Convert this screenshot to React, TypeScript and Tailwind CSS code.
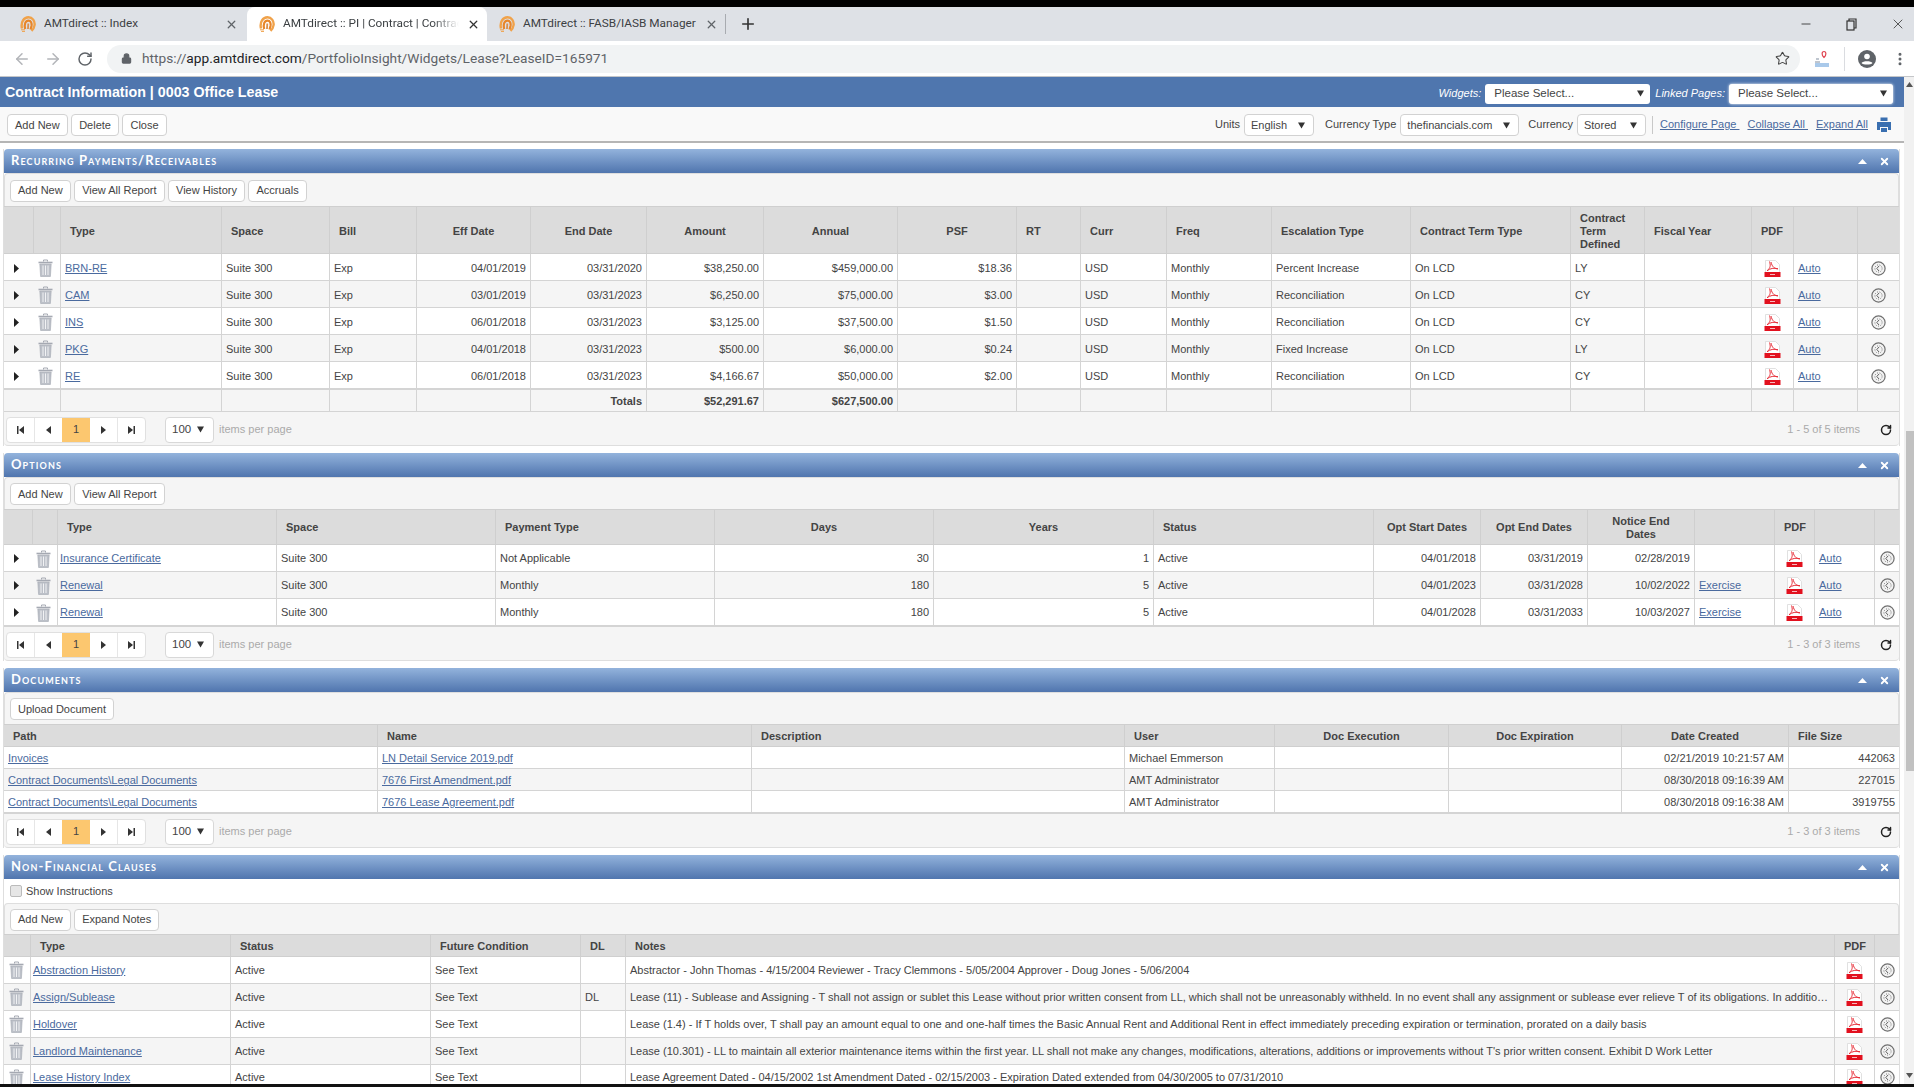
import React from "react";
import { ArrowLeft, ArrowRight, RotateCw, Star, Lock, Plus, X, Minus, EllipsisVertical } from "lucide-react";

type Col = { w: string; t?: React.ReactNode; ha?: "l" | "c"; ca?: "l" | "r" | "c"; noLine?: boolean };

const Favicon = () => (
  <svg width="16" height="16" viewBox="0 0 16 16" fill="none" className="shrink-0">
    <path d="M2 12.5 C0.5 6 4 1.2 8.5 1.2 C12.5 1.2 15 5 14.6 9 C14.3 11.5 13 13.5 11.5 14.8" stroke="#f0a24a" strokeWidth="2.4" />
    <path d="M5.2 13 C4 8 5.5 4.6 8.5 4.6 C11 4.6 12 7 11.5 10 L10.5 13.5" stroke="#e8862a" strokeWidth="2.2" />
    <path d="M8 13 L8.3 7.5" stroke="#d98f4e" strokeWidth="1.8" />
    <path d="M1 13.8 H5 M2 15.4 H5" stroke="#f0a24a" strokeWidth="1" />
  </svg>
);

const Trash = () => (
  <svg width="15" height="18" viewBox="0 0 15 18" className="block mx-auto -translate-x-[1px]" fill="none">
    <path d="M5.5 2.5 V1 H9.5 V2.5" stroke="#a5a9b2" strokeWidth="1" />
    <path d="M0.5 3.5 H14.5" stroke="#a5a9b2" strokeWidth="1.6" />
    <path d="M1.8 5 H13.2 L12.4 17.5 H2.6 Z" fill="#bcc0c8" stroke="#a5a9b2" strokeWidth="0.6" />
    <path d="M5 6.5 V16 M7.5 6.5 V16 M10 6.5 V16" stroke="#f1f2f4" strokeWidth="1" />
  </svg>
);

const Pdf = () => (
  <svg width="17" height="17" viewBox="0 0 17 17" className="block mx-auto" fill="none">
    <path d="M1.5 12 V0.5 H11.5 L15.5 4.5 V12" fill="#fff" stroke="#d9d9d9" strokeWidth="0.8" />
    <path d="M5.5 1.5 C6.5 5 7 7.5 3 10.8 C6 8.5 10 7.5 14 8.8 C11 9 8 7 7 2" stroke="#e8303a" strokeWidth="1" fill="none" />
    <rect x="0.5" y="12" width="16" height="5" fill="#e2101e" />
    <rect x="6" y="14" width="5" height="1" fill="#f6b8bc" />
  </svg>
);

const Hist = () => (
  <svg width="15" height="15" viewBox="0 0 15 15" className="block mx-auto" fill="none">
    <circle cx="7.5" cy="7.5" r="6.6" fill="#f2f2f2" stroke="#6f6f6f" strokeWidth="1.2" />
    <circle cx="7.5" cy="7.5" r="3.6" stroke="#666" strokeWidth="0.9" strokeDasharray="1 1.5" />
    <path d="M8 5 L5.8 7.5 L8 10" stroke="#555" strokeWidth="0.9" />
  </svg>
);

const Expand = () => (
  <svg width="5" height="9" viewBox="0 0 5 9" className="block mx-auto -translate-x-[2px]">
    <path d="M0 0 L5 4.5 L0 9 Z" fill="#222" />
  </svg>
);

const Down = () => (
  <svg width="7" height="7" viewBox="0 0 7 7" className="shrink-0">
    <path d="M0 0.5 H7 L3.5 6.5 Z" fill="#333" />
  </svg>
);

const Lnk = ({ children, cls = "" }: { children: React.ReactNode; cls?: string }) => <a className={`text-[#4a6a9e] underline ${cls}`}>{children}</a>;

const Btn = ({ children }: { children: React.ReactNode }) => (
  <div className="h-[22px] px-[7px] flex items-center bg-white border border-[#d2d2d2] rounded-[4px] text-[#444] whitespace-nowrap">{children}</div>
);

const Sel = ({ children, w }: { children: React.ReactNode; w: string }) => (
  <div className={`${w} pl-[6px] h-[22px] pr-[8px] flex items-center justify-between bg-white border border-[#d2d2d2] rounded-[4px] text-[#444] whitespace-nowrap`}>
    <span>{children}</span>
    <Down />
  </div>
);

const Title = ({ children }: { children: React.ReactNode }) => (
  <div className="h-[24px] shrink-0 rounded-t-[4px] bg-gradient-to-b from-[#93b3dc] to-[#5075ae] flex items-center justify-between pl-[7px] pr-[9px]">
    <span className="font-['Lato',sans-serif] font-bold text-[13px] tracking-[1.1px] text-white [font-variant-caps:small-caps] whitespace-nowrap">{children}</span>
    <span className="flex items-center gap-[12px]">
      <svg width="9" height="5" viewBox="0 0 9 5"><path d="M0 5 L4.5 0 L9 5 Z" fill="#fff" /></svg>
      <X size={11} strokeWidth={4} className="text-white" />
    </span>
  </div>
);

const Bar = ({ items, h }: { items: string[]; h: string }) => (
  <div className={`${h} shrink-0 bg-[#f5f5f5] flex items-center gap-[3.5px] pl-[5px] pt-[1px] border-t border-x border-[#dedede] rounded-t-[4px]`}>
    {items.map((i) => (
      <Btn key={i}>{i}</Btn>
    ))}
  </div>
);

const Pager = ({ label, h }: { label: string; h: string }) => (
  <div className={`${h} shrink-0 bg-[#f5f5f5] flex items-center pl-[2px] pr-[7px] pt-[2px] border-b border-[#dedede] rounded-b-[4px]`}>
    <div className="flex h-[26px] w-[140px] bg-white border border-[#e0e0e0] rounded-[4px] overflow-hidden">
      <div className="flex-1 flex items-center justify-center border-r border-[#e6e6e6]">
        <svg width="7" height="8" viewBox="0 0 7 8"><path d="M0 0 H1.5 V8 H0 Z M7 0 V8 L2 4 Z" fill="#333" /></svg>
      </div>
      <div className="flex-1 flex items-center justify-center">
        <svg width="5" height="8" viewBox="0 0 5 8"><path d="M5 0 V8 L0 4 Z" fill="#333" /></svg>
      </div>
      <div className="w-[28px] flex items-center justify-center bg-[#fcc76f] text-[#444]">1</div>
      <div className="flex-1 flex items-center justify-center border-r border-[#e6e6e6]">
        <svg width="5" height="8" viewBox="0 0 5 8"><path d="M0 0 V8 L5 4 Z" fill="#333" /></svg>
      </div>
      <div className="flex-1 flex items-center justify-center">
        <svg width="7" height="8" viewBox="0 0 7 8"><path d="M0 0 V8 L5 4 Z M5.5 0 H7 V8 H5.5 Z" fill="#333" /></svg>
      </div>
    </div>
    <div className="ml-[19px] mr-[5px]">
      <div className="w-[49px] h-[26px] pl-[6px] pr-[9px] flex items-center justify-between bg-white border border-[#d8d8d8] rounded-[4px] text-[#444] text-[11.5px]">
        <span>100</span>
        <Down />
      </div>
    </div>
    <span className="text-[#aaa]">items per page</span>
    <span className="ml-auto text-[#aaa] mr-[20px]">{label}</span>
    <RotateCw size={12} strokeWidth={3} className="text-[#222]" />
  </div>
);

const Grid = ({
  cols,
  rows,
  headH,
  rowH,
  lastRow,
  totals,
  nudge = "",
  headNudge = "",
}: {
  cols: Col[];
  rows: React.ReactNode[][];
  headH: string;
  rowH: string;
  lastRow: string;
  totals?: React.ReactNode;
  nudge?: string;
  headNudge?: string;
}) => (
  <table className="table-fixed w-full border-separate border-spacing-0 shrink-0">
    <colgroup>
      {cols.map((c, i) => (
        <col key={i} className={c.w} />
      ))}
    </colgroup>
    <thead>
      <tr className={headH}>
        {cols.map((c, i) => (
          <th
            key={i}
            className={`bg-[#dcdcdc] border-t border-b border-[#cfcfcf] font-bold text-[#444] leading-[13px] ${headNudge} ${i > 0 ? "border-l" : ""} ${
              c.ha === "c" ? "text-center px-[4px]" : "text-left pl-[9px] pr-[2px]"
            }`}
          >
            {c.t}
          </th>
        ))}
      </tr>
    </thead>
    <tbody>
      {rows.map((r, ri) => (
        <tr key={ri} className={`${ri === rows.length - 1 ? lastRow : rowH} ${ri % 2 ? "bg-[#f5f5f5]" : "bg-white"}`}>
          {r.map((cell, i) => {
            const c = cols[i];
            return (
              <td
                key={i}
                className={`${ri === rows.length - 1 ? "border-b-2" : "border-b"} border-[#d4d4d4] px-[4px] truncate text-[#444] ${nudge} ${
                  i > 0 && !c.noLine ? "border-l" : ""
                } ${c.ca === "r" ? "text-right" : c.ca === "c" ? "text-center" : "text-left"}`}
              >
                {cell}
              </td>
            );
          })}
        </tr>
      ))}
    </tbody>
    {totals}
  </table>
);

const recCols: Col[] = [
  { w: "w-[29px]" },
  { w: "w-[27px]", noLine: true },
  { w: "w-[161px]", t: "Type" },
  { w: "w-[108px]", t: "Space" },
  { w: "w-[87px]", t: "Bill" },
  { w: "w-[114px]", t: "Eff Date", ha: "c", ca: "r" },
  { w: "w-[116px]", t: "End Date", ha: "c", ca: "r" },
  { w: "w-[117px]", t: "Amount", ha: "c", ca: "r" },
  { w: "w-[134px]", t: "Annual", ha: "c", ca: "r" },
  { w: "w-[119px]", t: "PSF", ha: "c", ca: "r" },
  { w: "w-[64px]", t: "RT" },
  { w: "w-[86px]", t: "Curr" },
  { w: "w-[105px]", t: "Freq" },
  { w: "w-[139px]", t: "Escalation Type" },
  { w: "w-[160px]", t: "Contract Term Type" },
  { w: "w-[74px]", t: <>Contract<br />Term<br />Defined</> },
  { w: "w-[107px]", t: "Fiscal Year" },
  { w: "w-[42px]", t: "PDF" },
  { w: "w-[64px]" },
  { w: "w-[42px]" },
];

const recData = [
  ["BRN-RE", "04/01/2019", "03/31/2020", "$38,250.00", "$459,000.00", "$18.36", "Percent Increase", "LY"],
  ["CAM", "03/01/2019", "03/31/2023", "$6,250.00", "$75,000.00", "$3.00", "Reconciliation", "CY"],
  ["INS", "06/01/2018", "03/31/2023", "$3,125.00", "$37,500.00", "$1.50", "Reconciliation", "CY"],
  ["PKG", "04/01/2018", "03/31/2023", "$500.00", "$6,000.00", "$0.24", "Fixed Increase", "LY"],
  ["RE", "06/01/2018", "03/31/2023", "$4,166.67", "$50,000.00", "$2.00", "Reconciliation", "CY"],
];
const recRows = recData.map((d) => [
  <Expand />, <Trash />, <Lnk>{d[0]}</Lnk>, "Suite 300", "Exp", d[1], d[2], d[3], d[4], d[5], "", "USD", "Monthly", d[6], "On LCD", d[7], "",
  <Pdf />, <Lnk>Auto</Lnk>, <Hist />,
]);

const optCols: Col[] = [
  { w: "w-[28px]" },
  { w: "w-[25px]", noLine: true },
  { w: "w-[219px]", t: "Type" },
  { w: "w-[219px]", t: "Space" },
  { w: "w-[219px]", t: "Payment Type" },
  { w: "w-[219px]", t: "Days", ha: "c", ca: "r" },
  { w: "w-[220px]", t: "Years", ha: "c", ca: "r" },
  { w: "w-[220px]", t: "Status" },
  { w: "w-[107px]", t: "Opt Start Dates", ha: "c", ca: "r" },
  { w: "w-[107px]", t: "Opt End Dates", ha: "c", ca: "r" },
  { w: "w-[107px]", t: <>Notice End<br />Dates</>, ha: "c", ca: "r" },
  { w: "w-[80px]" },
  { w: "w-[40px]", t: "PDF" },
  { w: "w-[60px]" },
  { w: "w-[25px]" },
];

const optData = [
  ["Insurance Certificate", "Not Applicable", "30", "1", "04/01/2018", "03/31/2019", "02/28/2019", false],
  ["Renewal", "Monthly", "180", "5", "04/01/2023", "03/31/2028", "10/02/2022", true],
  ["Renewal", "Monthly", "180", "5", "04/01/2028", "03/31/2033", "10/03/2027", true],
] as const;
const optRows = optData.map((d) => [
  <Expand />, <Trash />, <Lnk cls="-ml-[2px]">{d[0]}</Lnk>, "Suite 300", d[1], d[2], d[3], "Active", d[4], d[5], d[6],
  d[7] ? <Lnk>Exercise</Lnk> : "", <Pdf />, <Lnk>Auto</Lnk>, <Hist />,
]);

const docCols: Col[] = [
  { w: "w-[373px]", t: "Path" },
  { w: "w-[374px]", t: "Name" },
  { w: "w-[373px]", t: "Description" },
  { w: "w-[150px]", t: "User" },
  { w: "w-[174px]", t: "Doc Execution", ha: "c" },
  { w: "w-[173px]", t: "Doc Expiration", ha: "c" },
  { w: "w-[167px]", t: "Date Created", ha: "c", ca: "r" },
  { w: "w-[111px]", t: "File Size", ca: "r" },
];
const docRows: React.ReactNode[][] = [
  [<Lnk>Invoices</Lnk>, <Lnk>LN Detail Service 2019.pdf</Lnk>, "", "Michael Emmerson", "", "", "02/21/2019 10:21:57 AM", "442063"],
  [<Lnk>Contract Documents\Legal Documents</Lnk>, <Lnk>7676 First Amendment.pdf</Lnk>, "", "AMT Administrator", "", "", "08/30/2018 09:16:39 AM", "227015"],
  [<Lnk>Contract Documents\Legal Documents</Lnk>, <Lnk>7676 Lease Agreement.pdf</Lnk>, "", "AMT Administrator", "", "", "08/30/2018 09:16:38 AM", "3919755"],
];

const nfCols: Col[] = [
  { w: "w-[26px]" },
  { w: "w-[200px]", t: "Type" },
  { w: "w-[200px]", t: "Status" },
  { w: "w-[150px]", t: "Future Condition" },
  { w: "w-[45px]", t: "DL" },
  { w: "w-[1209px]", t: "Notes" },
  { w: "w-[40px]", t: "PDF" },
  { w: "w-[25px]" },
];
const nfData = [
  ["Abstraction History", "", "Abstractor - John Thomas - 4/15/2004 Reviewer - Tracy Clemmons - 5/05/2004 Approver - Doug Jones - 5/06/2004"],
  ["Assign/Sublease", "DL", "Lease (11) - Sublease and Assigning - T shall not assign or sublet this Lease without prior written consent from LL, which shall not be unreasonably withheld. In no event shall any assignment or sublease ever relieve T of its obligations. In addition, T shall remain liable"],
  ["Holdover", "", "Lease (1.4) - If T holds over, T shall pay an amount equal to one and one-half times the Basic Annual Rent and Additional Rent in effect immediately preceding expiration or termination, prorated on a daily basis"],
  ["Landlord Maintenance", "", "Lease (10.301) - LL to maintain all exterior maintenance items within the first year. LL shall not make any changes, modifications, alterations, additions or improvements without T's prior written consent. Exhibit D Work Letter"],
  ["Lease History Index", "", "Lease Agreement Dated - 04/15/2002 1st Amendment Dated - 02/15/2003 - Expiration Dated extended from 04/30/2005 to 07/31/2010"],
];
const nfRows = nfData.map((d) => [<Trash />, <Lnk cls="-ml-[2px]">{d[0]}</Lnk>, "Active", "See Text", d[1], d[2], <Pdf />, <Hist />]);

const Tab = ({ w, title, active, textW }: { w: string; title: string; active?: boolean; textW: string }) => (
  <div className={`${w} h-full flex items-center pl-[12px] pr-[9px] gap-[8px] ${active ? "bg-white rounded-t-[8px]" : ""}`}>
    <Favicon />
    <span className={`${textW} shrink-0 overflow-hidden whitespace-nowrap text-[11.8px] text-[#3c4043] ${active ? "[mask-image:linear-gradient(to_right,black_85%,transparent)]" : ""}`}>{title}</span>
    <X size={13} strokeWidth={2.4} className={`ml-auto shrink-0 ${active ? "text-[#333]" : "text-[#5f6368]"}`} />
  </div>
);

export default function App() {
  return (
    <div className="w-[1914px] h-[1087px] overflow-hidden flex flex-col bg-white font-['Liberation_Sans',Arial,sans-serif] text-[11px] text-[#444]">
      <div className="h-[7px] shrink-0 bg-black" />
      {/* tabs */}
      <div className="h-[34px] shrink-0 bg-[#dee1e6] flex items-center font-['Roboto',sans-serif]">
        <div className="w-[8px]" />
        <Tab w="w-[239px]" title="AMTdirect :: Index" textW="w-[170px]" />
        <Tab w="w-[240px]" title="AMTdirect :: PI | Contract | Contract Information" textW="w-[176px]" active />
        <Tab w="w-[238px]" title="AMTdirect :: FASB/IASB Manager" textW="w-[174px]" />
        <div className="w-px h-[20px] bg-[#a8abb0]" />
        <Plus size={18} strokeWidth={2.2} className="ml-[13px] text-[#333]" />
        <div className="ml-auto flex items-center gap-[33px] pr-[8px] text-[#333]">
          <Minus size={14} strokeWidth={1.5} />
          <svg width="11" height="13" viewBox="0 0 11 13" fill="none" stroke="#333" strokeWidth="1.2"><rect x="1" y="3" width="7" height="9" /><path d="M3 3 V1 H10 V10 H8" /></svg>
          <X size={16} strokeWidth={1.2} />
        </div>
      </div>
      {/* address bar */}
      <div className="h-[36px] shrink-0 bg-white border-b border-[#c4c6c9] flex items-center pl-[13px] font-['Roboto',sans-serif]">
        <ArrowLeft size={18} strokeWidth={2} className="text-[#b3b5b9]" />
        <ArrowRight size={18} strokeWidth={2} className="ml-[13px] text-[#b3b5b9]" />
        <RotateCw size={16} strokeWidth={2.2} className="ml-[15px] text-[#5f6368]" />
        <div className="ml-[14px] w-[1693px] h-[28px] rounded-full bg-[#f1f3f4] flex items-center pl-[14px] pr-[10px]">
          <Lock size={11} strokeWidth={2.5} className="text-[#5f6368] fill-[#5f6368]" />
          <span className="ml-[10px] text-[13.7px] text-[#5f6368] whitespace-nowrap">
            https://<span className="text-[#202124]">app.amtdirect.com</span>/PortfolioInsight/Widgets/Lease?LeaseID=165971
          </span>
          <Star size={15} strokeWidth={1.7} className="ml-auto text-[#444]" />
        </div>
        <svg width="18" height="18" viewBox="0 0 18 18" className="ml-[13px]" fill="none">
          <path d="M11 1.5 C8.5 1.5 8.5 5.5 11 7.5 C13.5 5.5 13.5 1.5 11 1.5 Z" stroke="#e04652" strokeWidth="1.2" />
          <path d="M2 12 H7 M3 9 H6" stroke="#aab4c0" strokeWidth="1.4" />
          <rect x="2" y="13" width="14" height="4" fill="#a9c9ea" />
        </svg>
        <div className="ml-[13px] w-px h-[24px] bg-[#dadce0]" />
        <svg width="20" height="20" viewBox="0 0 20 20" className="ml-[12px]">
          <circle cx="10" cy="10" r="9" fill="#5f6368" />
          <circle cx="10" cy="7.5" r="2.8" fill="#fff" />
          <path d="M4.5 14 C6 11.5 14 11.5 15.5 14 C14 16 6 16 4.5 14 Z" fill="#fff" />
        </svg>
        <EllipsisVertical size={16} strokeWidth={2.5} className="ml-[15px] text-[#5f6368]" />
      </div>
      {/* page */}
      <div className="flex-1 min-h-0 flex">
        <div className="w-[1904px] h-full overflow-hidden flex flex-col">
          <div className="h-[30px] shrink-0 bg-[#4f76ae] flex items-center justify-between pl-[5px] pr-[11px] text-white">
            <span className="font-bold text-[14.25px] whitespace-nowrap pt-[2px]">Contract Information | 0003 Office Lease</span>
            <div className="flex items-center mt-[3px]">
              <i className="mr-[4px]">Widgets:</i>
              <div className="w-[165px] h-[20px] pl-[9px] pr-[6px] flex items-center justify-between bg-white rounded-[3px] text-[#444] text-[11.5px]">
                <span>Please Select...</span>
                <Down />
              </div>
              <i className="ml-[5px] mr-[4px]">Linked Pages:</i>
              <div className="w-[164px] h-[20px] pl-[9px] pr-[6px] flex items-center justify-between bg-white rounded-[3px] text-[#444] text-[11.5px] shadow-[0_0_3px_#fff]">
                <span>Please Select...</span>
                <Down />
              </div>
            </div>
          </div>
          <div className="h-[36px] shrink-0 bg-[#f9f9f9] border-b-2 border-[#b5b5b5] flex items-center justify-between pl-[7px] pr-[13px] pt-[2px]">
            <div className="flex items-center gap-[3.5px]">
              <Btn>Add New</Btn>
              <Btn>Delete</Btn>
              <Btn>Close</Btn>
            </div>
            <div className="flex items-center">
              <span className="mr-[4px] mb-[2px]">Units</span>
              <Sel w="w-[70px]">English</Sel>
              <span className="ml-[11px] mr-[4px] mb-[2px]">Currency Type</span>
              <Sel w="w-[119px]">thefinancials.com</Sel>
              <span className="ml-[9px] mr-[4px] mb-[2px]">Currency</span>
              <Sel w="w-[69px]">Stored</Sel>
              <div className="ml-[6px] mr-[7px] w-px h-[18px] bg-[#c8c8c8]" />
              <Lnk cls="mb-[2px]">Configure Page&nbsp;</Lnk>
              <span className="ml-[8px] mb-[2px]"><Lnk>Collapse All&nbsp;</Lnk></span>
              <span className="ml-[8px] mb-[2px]"><Lnk>Expand All</Lnk></span>
              <svg width="14" height="15" viewBox="0 0 14 15" className="ml-[9px] mb-[2px]">
                <path d="M3.5 0.5 H10.5 V4 H3.5 Z M0 5 H14 V13 H11 V10 H3 V13 H0 Z M4 11 H10 V15 H4 Z" fill="#3a6fb0" />
              </svg>
            </div>
          </div>
          <div className="mt-[6px] pl-[3px] pr-[4px] flex flex-col gap-[7px]">
            <section className="flex flex-col border-x border-[#dedede]">
              <Title>Recurring Payments/Receivables</Title>
              <Bar h="h-[33px]" items={["Add New", "View All Report", "View History", "Accruals"]} />
              <Grid
                cols={recCols}
                rows={recRows}
                headH="h-[48px]"
                rowH="h-[27px]"
                lastRow="h-[28px]"
                nudge="pt-[2px]"
                headNudge="pt-[2px]"
                totals={
                  <tfoot>
                    <tr className="h-[22px] bg-[#f5f5f5]">
                      {recCols.map((c, i) =>
                        i === 0 ? (
                          <td key={i} colSpan={2} className="border-b border-[#d4d4d4]" />
                        ) : i === 1 ? null : (
                          <td key={i} className="border-b border-l border-[#d4d4d4] px-[4px] pt-[2px] font-bold text-right text-[#444]">
                            {i === 6 ? "Totals" : i === 7 ? "$52,291.67" : i === 8 ? "$627,500.00" : ""}
                          </td>
                        )
                      )}
                    </tr>
                  </tfoot>
                }
              />
              <Pager h="h-[34px]" label="1 - 5 of 5 items" />
            </section>
            <section className="flex flex-col border-x border-[#dedede]">
              <Title>Options</Title>
              <Bar h="h-[32px]" items={["Add New", "View All Report"]} />
              <Grid cols={optCols} rows={optRows} headH="h-[36px]" rowH="h-[27px]" lastRow="h-[28px]" nudge="pt-[1px]" headNudge="pt-[1px]" />
              <Pager h="h-[34px]" label="1 - 3 of 3 items" />
            </section>
            <section className="flex flex-col border-x border-[#dedede]">
              <Title>Documents</Title>
              <Bar h="h-[32px]" items={["Upload Document"]} />
              <Grid cols={docCols} rows={docRows} headH="h-[23px]" rowH="h-[22px]" lastRow="h-[23px]" nudge="pt-[2px]" headNudge="pt-[1px]" />
              <Pager h="h-[34px]" label="1 - 3 of 3 items" />
            </section>
            <section className="flex flex-col border-x border-[#dedede]">
              <Title>Non-Financial Clauses</Title>
              <div className="h-[24px] shrink-0 bg-white flex items-center pl-[6px] gap-[4px]">
                <div className="w-[12px] h-[12px] rounded-[2px] bg-[#e6e6e6] border border-[#bbb]" />
                <span>Show Instructions</span>
              </div>
              <Bar h="h-[31px]" items={["Add New", "Expand Notes"]} />
              <Grid cols={nfCols} rows={nfRows} headH="h-[23px]" rowH="h-[27px]" lastRow="h-[27px]" headNudge="pt-[1px]" />
            </section>
          </div>
        </div>
        <div className="w-[10px] h-full bg-[#f1f1f1] flex flex-col items-end">
          <svg width="7" height="5" viewBox="0 0 7 5" className="mt-[5px] mr-[1px]"><path d="M0 5 L3.5 0 L7 5 Z" fill="#555" /></svg>
          <div className="mt-[344px] w-[8px] h-[340px] bg-[#c1c1c1]" />
          <svg width="7" height="5" viewBox="0 0 7 5" className="mt-auto mb-[6px] mr-[1px]"><path d="M0 0 L7 0 L3.5 5 Z" fill="#555" /></svg>
        </div>
      </div>
      <div className="h-[3px] shrink-0 bg-[#111]" />
    </div>
  );
}
